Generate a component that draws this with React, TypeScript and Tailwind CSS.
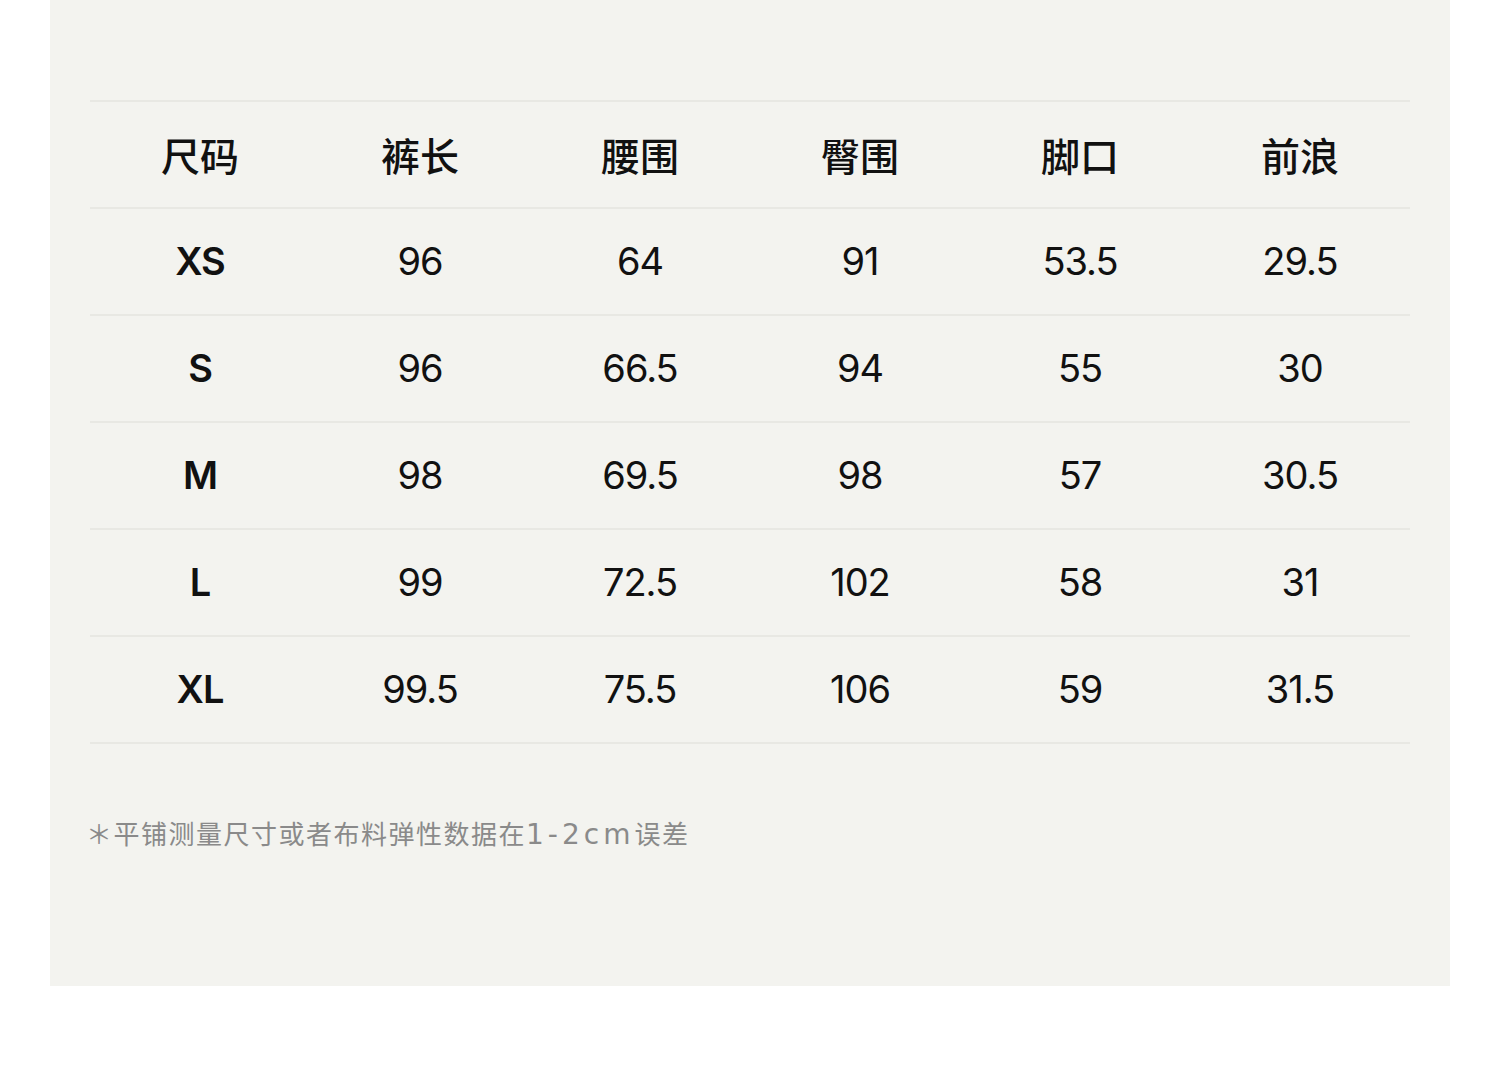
import React from "react";

const headers = ["尺码", "裤长", "腰围", "臀围", "脚口", "前浪"];
const rows: string[][] = [
  ["XS", "96", "64", "91", "53.5", "29.5"],
  ["S", "96", "66.5", "94", "55", "30"],
  ["M", "98", "69.5", "98", "57", "30.5"],
  ["L", "99", "72.5", "102", "58", "31"],
  ["XL", "99.5", "75.5", "106", "59", "31.5"],
];

export default function App() {
  return (
    <div className="w-[1500px] h-[1086px] bg-white">
      <div
        className="ml-[50px] w-[1400px] h-[986px] bg-[#f3f3ef] pt-[100px] px-[40px]"
        style={{ fontFamily: 'Inter, "Noto Sans CJK SC", sans-serif' }}
      >
        <div className="border-t-2 border-[#e8e8e3]">
          <div className="grid grid-cols-6 h-[107px] items-center border-b-2 border-[#e8e8e3]">
            {headers.map((h) => (
              <div
                key={h}
                className="text-center text-[39px] font-medium text-[#111]"
                style={{ fontFamily: '"Noto Sans CJK SC", sans-serif' }}
              >
                {h}
              </div>
            ))}
          </div>
          {rows.map((r) => (
            <div
              key={r[0]}
              className="grid grid-cols-6 h-[107px] items-center border-b-2 border-[#e8e8e3]"
            >
              {r.map((c, i) => (
                <div
                  key={i}
                  className={`text-center text-[38px] tracking-[-1px] text-[#111] ${i === 0 ? "font-semibold" : "font-normal"}`}
                >
                  {c}
                </div>
              ))}
            </div>
          ))}
        </div>
        <div
          className="mt-[75px] text-[26px] leading-[32px] tracking-[1.5px] text-[#8a8a8a] -ml-[4px] whitespace-nowrap"
          style={{ fontFamily: 'Inter, "Noto Sans CJK SC", sans-serif' }}
        >
          ＊平铺测量尺寸或者布料弹性数据在
          <span
            className="text-[28px] tracking-[4px]"
            style={{ fontFamily: '"DejaVu Sans", sans-serif' }}
          >
            1-2cm
          </span>
          误差
        </div>
      </div>
    </div>
  );
}
